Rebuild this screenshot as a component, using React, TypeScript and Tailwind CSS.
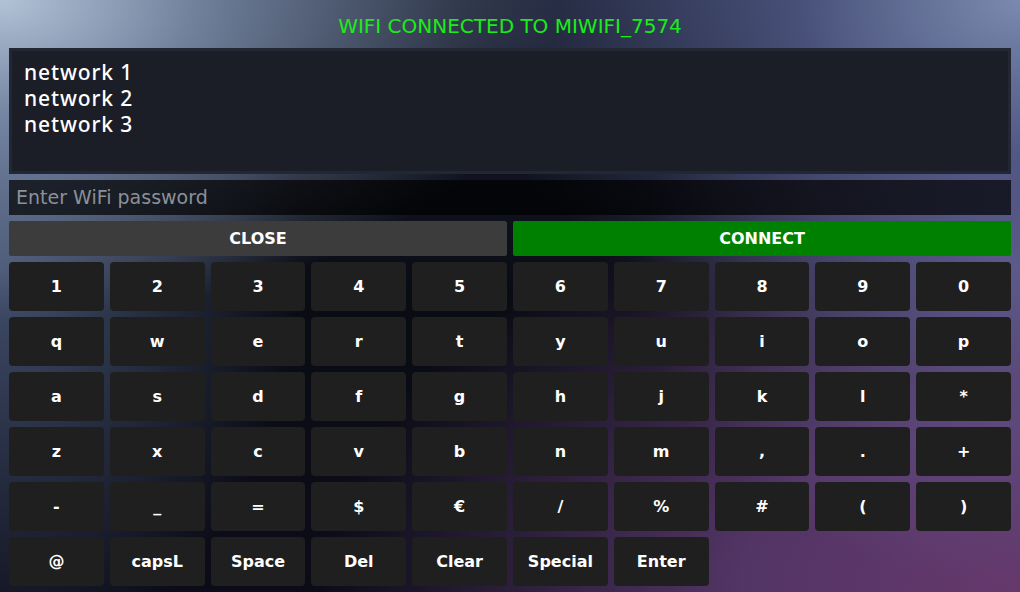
import React from "react";

const rows: string[][] = [
  ["1", "2", "3", "4", "5", "6", "7", "8", "9", "0"],
  ["q", "w", "e", "r", "t", "y", "u", "i", "o", "p"],
  ["a", "s", "d", "f", "g", "h", "j", "k", "l", "*"],
  ["z", "x", "c", "v", "b", "n", "m", ",", ".", "+"],
  ["-", "_", "=", "$", "€", "/", "%", "#", "(", ")"],
  ["@", "capsL", "Space", "Del", "Clear", "Special", "Enter"],
];

export default function App() {
  return (
    <div
      className="relative w-[1020px] h-[592px] overflow-hidden flex flex-col px-[9px] bg-[#0b0d16]"
      style={{
        fontFamily: '"DejaVu Sans", sans-serif',
        backgroundImage:
          "radial-gradient(ellipse 560px 320px at 0% 0%, #b2c2d6 0%, rgba(140,160,190,0.75) 35%, rgba(60,75,105,0) 100%)," +
          "radial-gradient(ellipse 560px 380px at 100% 0%, #7a8aae 0%, rgba(90,100,150,0.7) 40%, rgba(60,70,110,0) 100%)," +
          "radial-gradient(ellipse 380px 320px at 100% 45%, rgba(112,104,160,0.75) 0%, rgba(90,80,140,0) 100%)," +
          "radial-gradient(ellipse 700px 420px at 100% 100%, #66386c 0%, rgba(95,60,115,0.85) 40%, rgba(60,40,90,0) 100%)," +
          "radial-gradient(ellipse 300px 400px at 0% 45%, rgba(80,95,130,0.8) 0%, rgba(40,50,80,0) 100%)," +
          "linear-gradient(180deg, #1a1f30 0%, #0a0c14 50%, #0c0c18 100%)",
      }}
    >
      <div className="h-[48px] pt-[4px] flex items-center justify-center text-[#1aec1a] text-[20px]">
        WIFI CONNECTED TO MIWIFI_7574
      </div>
      <div
        className="h-[126px] bg-[#1b1d27] border-[3px] border-[#232633] pl-[12px] pt-[8px] text-white text-[21px] leading-[26px] font-medium tracking-[0.9px]"
        style={{ fontFamily: '"Noto Sans", sans-serif' }}
      >
        <div>network 1</div>
        <div>network 2</div>
        <div>network 3</div>
      </div>
      <div className="mt-[6px] h-[35px] bg-black/70 flex items-center px-[7px] text-[19px] text-[#8b909a]">
        Enter WiFi password
      </div>
      <div className="mt-[6px] h-[35px] flex gap-[6px]">
        <div className="flex-1 bg-[#3c3c3c] rounded-[2px] flex items-center justify-center text-white font-bold text-[16px]">
          CLOSE
        </div>
        <div className="flex-1 bg-[#008000] rounded-[2px] flex items-center justify-center text-white font-bold text-[16px]">
          CONNECT
        </div>
      </div>
      <div className="mt-[6px] grid grid-cols-10 gap-[6px] auto-rows-[49px]">
        {rows.flat().map((k, i) => (
          <div
            key={i}
            className="bg-[#1f1f1f] rounded-[4px] flex items-center justify-center text-white font-bold text-[16px]"
          >
            {k}
          </div>
        ))}
      </div>
    </div>
  );
}
